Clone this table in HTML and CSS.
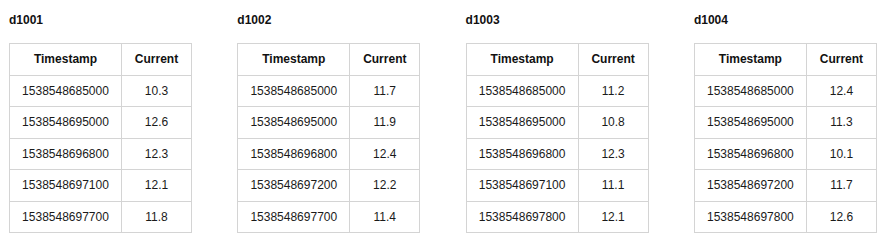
FILE: index.html
```html
<!DOCTYPE html>
<html>
<head>
<meta charset="utf-8">
<link rel="stylesheet" href="styles.css">
</head>
<body>
<div class="groups">
  <section class="group">
    <h3 class="title">d1001</h3>
    <table class="data">
      <thead><tr><th class="c1">Timestamp</th><th class="c2">Current</th></tr></thead>
      <tbody>
        <tr><td>1538548685000</td><td>10.3</td></tr>
        <tr><td>1538548695000</td><td>12.6</td></tr>
        <tr><td>1538548696800</td><td>12.3</td></tr>
        <tr><td>1538548697100</td><td>12.1</td></tr>
        <tr><td>1538548697700</td><td>11.8</td></tr>
      </tbody>
    </table>
  </section>
  <section class="group">
    <h3 class="title">d1002</h3>
    <table class="data">
      <thead><tr><th class="c1">Timestamp</th><th class="c2">Current</th></tr></thead>
      <tbody>
        <tr><td>1538548685000</td><td>11.7</td></tr>
        <tr><td>1538548695000</td><td>11.9</td></tr>
        <tr><td>1538548696800</td><td>12.4</td></tr>
        <tr><td>1538548697200</td><td>12.2</td></tr>
        <tr><td>1538548697700</td><td>11.4</td></tr>
      </tbody>
    </table>
  </section>
  <section class="group">
    <h3 class="title">d1003</h3>
    <table class="data">
      <thead><tr><th class="c1">Timestamp</th><th class="c2">Current</th></tr></thead>
      <tbody>
        <tr><td>1538548685000</td><td>11.2</td></tr>
        <tr><td>1538548695000</td><td>10.8</td></tr>
        <tr><td>1538548696800</td><td>12.3</td></tr>
        <tr><td>1538548697100</td><td>11.1</td></tr>
        <tr><td>1538548697800</td><td>12.1</td></tr>
      </tbody>
    </table>
  </section>
  <section class="group">
    <h3 class="title">d1004</h3>
    <table class="data">
      <thead><tr><th class="c1">Timestamp</th><th class="c2">Current</th></tr></thead>
      <tbody>
        <tr><td>1538548685000</td><td>12.4</td></tr>
        <tr><td>1538548695000</td><td>11.3</td></tr>
        <tr><td>1538548696800</td><td>10.1</td></tr>
        <tr><td>1538548697200</td><td>11.7</td></tr>
        <tr><td>1538548697800</td><td>12.6</td></tr>
      </tbody>
    </table>
  </section>
</div>
</body>
</html>
```
FILE: styles.css
```css
html, body {
  margin: 0;
  padding: 0;
  background: #ffffff;
}
body {
  font-family: "Liberation Sans", Arial, Helvetica, sans-serif;
  font-size: 12px;
  color: #1a1a1a;
}
.groups {
  display: flex;
  gap: 46.3px;
  padding: 13px 0 0 9px;
}
.group {
  width: 182px;
}
.title {
  margin: 0 0 16px 0;
  font-size: 12px;
  line-height: 14px;
  font-weight: bold;
  color: #111;
}
.data {
  width: 180px;
  border-collapse: collapse;
  table-layout: fixed;
}
.data th, .data td {
  border: 1px solid #d4d4d4;
  height: 30.5px;
  padding: 0;
  text-align: center;
  vertical-align: middle;
  font-size: 12px;
  line-height: 14px;
}
.data th {
  font-weight: bold;
  color: #111;
}
.c1 { width: 111px; }
.c2 { width: 69px; }
```
